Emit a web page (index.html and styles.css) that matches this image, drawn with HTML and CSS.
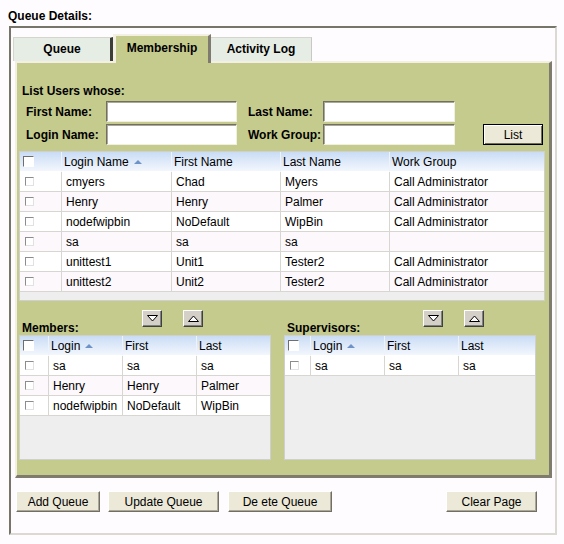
FILE: index.html
```html
<!DOCTYPE html>
<html lang="en">
<head>
    <meta charset="UTF-8">
    <title>Queue Details</title>
    <link rel="stylesheet" href="styles.css">
</head>
<body>

    <div class="page">
        <h1 class="page-title">Queue Details:</h1>

        <div class="details">
            <div class="tabs">
                <div class="tab tab-queue">Queue</div>
                <div class="tab tab-active">Membership</div>
                <div class="tab tab-log">Activity Log</div>
            </div>

            <div class="panel">
                <div class="filter-title">List Users whose:</div>
                <div class="filter">
                    <label>First Name:</label>
                    <input type="text">
                    <label class="label-2">Last Name:</label>
                    <input type="text">
                    <span></span>
                    <label>Login Name:</label>
                    <input type="text">
                    <label class="label-2">Work Group:</label>
                    <input type="text">
                    <button class="btn btn-list">List</button>
                </div>

                <!-- Lista de usuarios -->
                <div class="grid grid-users">
                    <table>
                        <colgroup>
                            <col style="width: 42px">
                            <col style="width: 110px">
                            <col style="width: 109px">
                            <col style="width: 109px">
                            <col>
                        </colgroup>
                        <tr>
                            <th class="cell-check"><span class="check check-head"></span></th>
                            <th>Login Name<span class="sort"></span></th>
                            <th>First Name</th>
                            <th>Last Name</th>
                            <th>Work Group</th>
                        </tr>
                        <tr><td class="cell-check"><span class="check"></span></td><td>cmyers</td><td>Chad</td><td>Myers</td><td>Call Administrator</td></tr>
                        <tr><td class="cell-check"><span class="check"></span></td><td>Henry</td><td>Henry</td><td>Palmer</td><td>Call Administrator</td></tr>
                        <tr><td class="cell-check"><span class="check"></span></td><td>nodefwipbin</td><td>NoDefault</td><td>WipBin</td><td>Call Administrator</td></tr>
                        <tr><td class="cell-check"><span class="check"></span></td><td>sa</td><td>sa</td><td>sa</td><td></td></tr>
                        <tr><td class="cell-check"><span class="check"></span></td><td>unittest1</td><td>Unit1</td><td>Tester2</td><td>Call Administrator</td></tr>
                        <tr><td class="cell-check"><span class="check"></span></td><td>unittest2</td><td>Unit2</td><td>Tester2</td><td>Call Administrator</td></tr>
                    </table>
                </div>

                <div class="lists">
                    <!-- Members -->
                    <div class="list">
                        <div class="list-head">
                            <span class="list-title title-members">Members:</span>
                            <div class="movers">
                                <button class="mover"><svg width="11" height="7" viewBox="0 0 11 7"><polygon points="0.5,0.5 10.5,0.5 5.5,6" fill="#fff" stroke="#000"/></svg></button>
                                <button class="mover"><svg width="11" height="7" viewBox="0 0 11 7"><polygon points="0.5,6.5 10.5,6.5 5.5,1" fill="#fff" stroke="#000"/></svg></button>
                            </div>
                        </div>
                        <div class="grid grid-small">
                            <table>
                                <colgroup>
                                    <col style="width: 29px">
                                    <col style="width: 74px">
                                    <col style="width: 74px">
                                    <col>
                                </colgroup>
                                <tr>
                                    <th class="cell-check"><span class="check check-head"></span></th>
                                    <th>Login<span class="sort"></span></th>
                                    <th>First</th>
                                    <th>Last</th>
                                </tr>
                                <tr><td class="cell-check"><span class="check"></span></td><td>sa</td><td>sa</td><td>sa</td></tr>
                                <tr><td class="cell-check"><span class="check"></span></td><td>Henry</td><td>Henry</td><td>Palmer</td></tr>
                                <tr><td class="cell-check"><span class="check"></span></td><td>nodefwipbin</td><td>NoDefault</td><td>WipBin</td></tr>
                            </table>
                        </div>
                    </div>

                    <!-- Supervisors -->
                    <div class="list">
                        <div class="list-head">
                            <span class="list-title title-supervisors">Supervisors:</span>
                            <div class="movers">
                                <button class="mover"><svg width="11" height="7" viewBox="0 0 11 7"><polygon points="0.5,0.5 10.5,0.5 5.5,6" fill="#fff" stroke="#000"/></svg></button>
                                <button class="mover"><svg width="11" height="7" viewBox="0 0 11 7"><polygon points="0.5,6.5 10.5,6.5 5.5,1" fill="#fff" stroke="#000"/></svg></button>
                            </div>
                        </div>
                        <div class="grid grid-small">
                            <table>
                                <colgroup>
                                    <col style="width: 26px">
                                    <col style="width: 74px">
                                    <col style="width: 74px">
                                    <col>
                                </colgroup>
                                <tr>
                                    <th class="cell-check"><span class="check check-head"></span></th>
                                    <th>Login<span class="sort"></span></th>
                                    <th>First</th>
                                    <th>Last</th>
                                </tr>
                                <tr><td class="cell-check"><span class="check"></span></td><td>sa</td><td>sa</td><td>sa</td></tr>
                            </table>
                        </div>
                    </div>
                </div>
            </div>

            <div class="actions">
                <button class="btn btn-add">Add Queue</button>
                <button class="btn btn-update">Update Queue</button>
                <button class="btn btn-delete">De ete Queue</button>
                <button class="btn btn-clear">Clear Page</button>
            </div>
        </div>
    </div>

</body>
</html>
```

FILE: styles.css
```css
* {
    margin: 0;
    padding: 0;
    box-sizing: border-box;
}
body {
    background-color: #fffcff;
    font-family: 'Liberation Sans', Arial, sans-serif;
    font-size: 12px;
    color: #000;
}
.page {
    padding: 9px 7px 0 9px;
}
.page-title {
    font-size: 12px;
    font-weight: bold;
    line-height: 14px;
    margin: 0 0 3px -1px;
}
.details {
    width: 548px;
    border-style: solid;
    border-width: 2px;
    border-color: #77746a #dcd9d2 #dcd9d2 #77746a;
    padding: 6px 2px 21px 2px;
}
.tabs {
    display: flex;
    align-items: flex-end;
    height: 27px;
}
.tab {
    height: 24px;
    font-weight: bold;
    font-size: 12px;
    text-align: center;
    line-height: 22px;
    background-color: #e5ede4;
    border-top: 1px solid #d4d6ce;
}
.tab-queue {
    width: 100px;
    border-left: 1px solid #d4d6ce;
    border-right: 3px solid #3c3c38;
}
.tab-active {
    position: relative;
    z-index: 2;
    width: 98px;
    height: 29px;
    margin-bottom: -2px;
    line-height: 25px;
    background-color: #c5ca8d;
    border-top: 2px solid #f3efe3;
    border-left: 3px solid #f3efe3;
    border-right: 3px solid #7f7b6f;
}
.tab-log {
    width: 101px;
    border-right: 1px solid #c8c8c4;
}
.panel {
    margin: 0 1px 0 2px;
    background-color: #c5ca8d;
    border-style: solid;
    border-width: 2px 3px 3px 2px;
    border-color: #f3efe3 #7f7b6f #7f7b6f #f3efe3;
    padding: 21px 4px 15px 2px;
}
.filter-title {
    font-weight: bold;
    font-size: 12px;
    line-height: 14px;
    margin: 0 0 3px 3px;
}
.filter {
    display: grid;
    grid-template-columns: 80px 131px 86px 132px 1fr;
    row-gap: 2px;
    align-items: center;
    margin-left: 7px;
}
.filter label {
    font-weight: bold;
    font-size: 12px;
}
.filter .label-2 {
    padding-left: 11px;
}
.filter input {
    height: 21px;
    border: 1px solid;
    border-color: #716f64 #f1efe2 #f1efe2 #716f64;
    box-shadow: inset 1px 1px #aca899;
    background-color: #fff;
    outline: none;
}
.btn {
    height: 21px;
    font-family: 'Liberation Sans', Arial, sans-serif;
    font-size: 12px;
    color: #000;
    background-color: #ece9d8;
    border: 1px solid;
    border-color: #fff #716f64 #716f64 #fff;
    box-shadow: inset -1px -1px #aca899;
}
.btn-list {
    justify-self: end;
    width: 60px;
    height: 21px;
    margin-right: 2px;
    border: 1px solid #000;
    box-shadow: inset 1px 1px #fff, inset -1px -1px #716f64;
}
.grid {
    background-color: #eeeeee;
    border: 1px solid #cfcfcf;
    overflow: hidden;
}
.grid table {
    width: 100%;
    border-collapse: separate;
    border-spacing: 0;
    table-layout: fixed;
}
.grid th, .grid td {
    height: 20px;
    padding: 0 0 0 4px;
    text-align: left;
    font-weight: normal;
    white-space: nowrap;
    overflow: hidden;
    border-right: 1px solid #d8d6d0;
    border-bottom: 1px solid #d8d6d0;
    background-color: #fff;
}
.grid tr:nth-child(odd) td {
    background-color: #fcf8fc;
}
.grid th {
    padding-left: 2px;
    background: linear-gradient(#c9dcf5, #f3f7fd);
    border-color: #eef3fb;
    border-bottom: 1px solid #fff;
}
.grid th:last-child, .grid td:last-child {
    border-right: none;
}
.grid-users {
    width: 526px;
    height: 150px;
    margin-top: 6px;
}
.grid-small {
    width: 252px;
    height: 125px;
}
.grid .cell-check {
    padding: 0 0 0 5px;
    vertical-align: top;
    padding-top: 5px;
}
.grid th.cell-check {
    padding: 4px 0 0 3px;
}
.check {
    display: block;
    width: 9px;
    height: 9px;
    background-color: #fff;
    border: 1px solid;
    border-color: #8c8c8c #e2e2e2 #e2e2e2 #8c8c8c;
}
.check-head {
    width: 11px;
    height: 11px;
    border-color: #6e6e6e #fff #fff #6e6e6e;
}
.sort {
    display: inline-block;
    margin-left: 5px;
    vertical-align: middle;
    border-left: 4px solid transparent;
    border-right: 4px solid transparent;
    border-bottom: 4px solid #6f93c8;
}
.lists {
    display: flex;
    gap: 13px;
    padding-top: 9px;
}
.list-head {
    display: flex;
    height: 25px;
}
.list-title {
    align-self: flex-end;
    font-weight: bold;
    font-size: 12px;
    line-height: 14px;
    padding-left: 3px;
}
.title-members {
    width: 123px;
}
.title-supervisors {
    width: 139px;
}
.movers {
    display: flex;
    gap: 21px;
}
.mover {
    width: 20px;
    height: 17px;
    display: flex;
    align-items: center;
    justify-content: center;
    background-color: #d4d0c8;
    border: 1px solid;
    border-color: #fff #404040 #404040 #fff;
    box-shadow: inset -1px -1px #808080;
}
.actions {
    display: flex;
    margin-top: 13px;
    padding: 0 16px 0 3px;
}
.btn-add {
    width: 84px;
}
.btn-update {
    width: 111px;
    margin-left: 8px;
}
.btn-delete {
    width: 104px;
    margin-left: 9px;
}
.btn-clear {
    width: 91px;
    margin-left: auto;
}
```
